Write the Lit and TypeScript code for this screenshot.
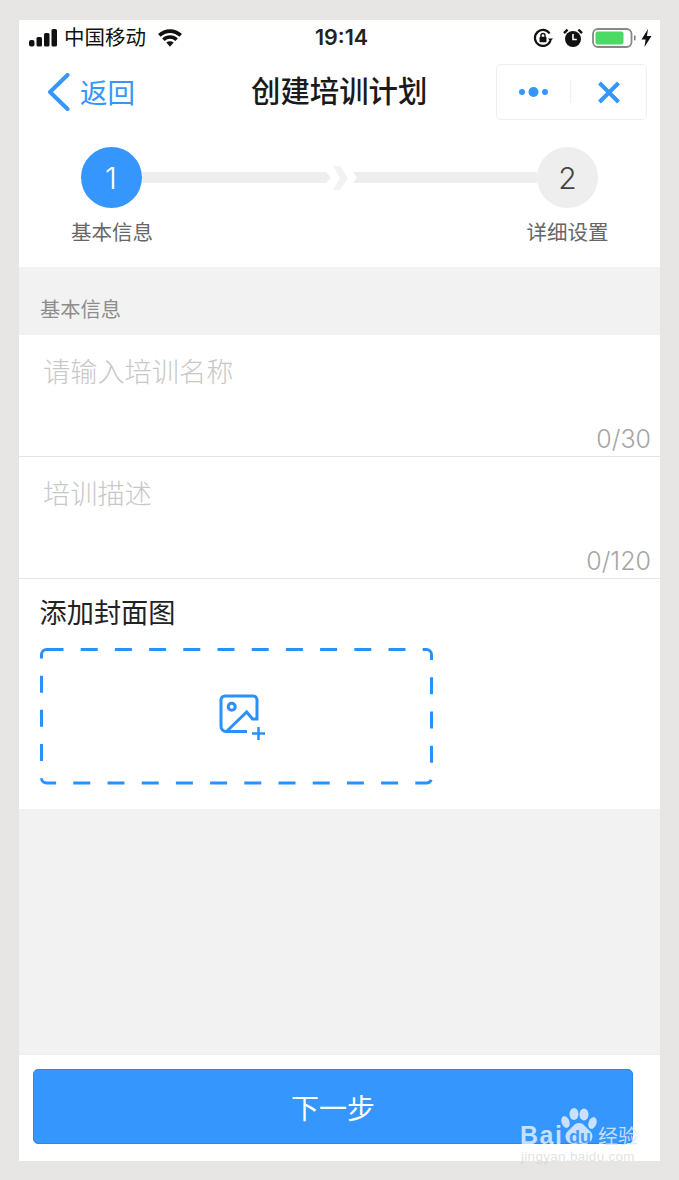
import { LitElement, html, css } from 'lit';
import { customElement } from 'lit/decorators.js';

const BLUE = '#3596fd';
const LINE_BLUE = '#2a90fb';

@customElement('app-root')
export class AppRoot extends LitElement {
  static styles = css`
    :host {
      --blue: #3596fd;
      display: block;
      min-height: 1180px;
      background: #e8e5e5;
      padding: 20px 19px 19px;
      box-sizing: border-box;
      font-family: "Liberation Sans", "Noto Sans CJK SC", sans-serif;
    }
    .frame {
      position: relative;
      width: 641px;
      height: 1141px;
      background: #f2f2f2;
      display: flex;
      flex-direction: column;
    }
    svg { display: block; flex: none; }

    .status {
      height: 35px;
      background: #fff;
      display: flex;
      align-items: center;
      padding: 0 8px 0 10px;
      color: #111;
    }
    .carrier { font-size: 20.5px; margin: 0 12px 3px 7px; }
    .time { font-family: Inter, "Liberation Sans", sans-serif; font-size: 21.5px; font-weight: 600; color: #222; margin: 0 0 1px 133px; }
    .status-right { margin-left: auto; display: flex; align-items: center; }

    .nav {
      height: 78px;
      background: #fff;
      display: flex;
      align-items: flex-start;
      padding-left: 28px;
      padding-right: 13px;
    }
    .back { display: flex; align-items: center; gap: 9px; margin-top: 18px; color: var(--blue); font-size: 27.5px; height: 38px; }
    .back span { margin-bottom: 3px; }
    .title { font-size: 29.4px; font-weight: 500; color: #1a1a1a; margin-left: 116px; margin-top: 16px; line-height: 42px; }
    .capsule {
      margin-left: auto;
      margin-top: 9px;
      width: 151px;
      height: 56px;
      box-sizing: border-box;
      border: 1px solid #eee;
      border-radius: 5px;
      display: flex;
      align-items: center;
    }

    .stepper { background: #fff; height: 134px; box-sizing: border-box; padding: 14px 62px 0 61.5px; }
    .steps { display: flex; align-items: center; }
    .circle {
      width: 61px;
      height: 61px;
      flex: none;
      border-radius: 50%;
      display: flex;
      align-items: center;
      justify-content: center;
      font-family: Inter, "Liberation Sans", sans-serif;
      font-size: 30px;
      font-weight: 300;
    }
    .circle.on { background: var(--blue); color: #fff; }
    .circle.off { background: #eee; color: #444; }
    .track {
      height: 11px;
      background: #eee;
      flex: 1;
      clip-path: polygon(0 0, 100% 0, 100% 100%, 0 100%, 4px 50%);
    }
    .track.first {
      flex: 0 0 189.5px;
      clip-path: polygon(0 0, calc(100% - 5px) 0, 100% 50%, calc(100% - 5px) 100%, 0 100%);
    }
    .labels { display: flex; justify-content: space-between; margin: 10px -10.5px 0 -9.5px; font-size: 20.5px; color: #666; line-height: 30px; }

    .section { height: 68px; display: flex; align-items: center; padding-left: 21px; padding-top: 14px; box-sizing: border-box; font-size: 20.3px; color: #8d8d8d; }

    .field {
      background: #fff;
      height: 122px;
      box-sizing: border-box;
      border-bottom: 1px solid #e5e5e5;
      padding: 17px 9px 0 24px;
      display: flex;
      flex-direction: column;
    }
    .placeholder { font-size: 27.2px; color: #c8c8c8; font-weight: 300; line-height: 42px; }
    .count {
      margin-top: auto;
      margin-bottom: 2px;
      text-align: right;
      font-family: Inter, "Liberation Sans", sans-serif;
      font-size: 25px;
      font-weight: 300;
      color: #a6a6a6;
      line-height: 30px;
    }

    .cover { background: #fff; height: 230px; box-sizing: border-box; padding: 15px 21px 0 20.5px; }
    .cover h3 { margin: 0 0 14px; font-size: 27.2px; font-weight: 400; color: #222; line-height: 40px; }

    .spacer { flex: 1; }
    .footer { background: #fff; height: 107px; box-sizing: border-box; border-top: 1px solid #eee; padding: 14px 0 0 14px; }
    .next {
      width: 600px;
      height: 75px;
      box-sizing: border-box;
      border: 1px solid #2b86e6;
      border-radius: 5px;
      background: var(--blue);
      color: #fff;
      font-family: inherit;
      font-size: 28px;
      padding: 0;
    }

    /* baidu watermark lies over the button */
    .mark { position: absolute; left: 501px; top: 1088px; width: 125px; height: 55px; color: rgba(225, 238, 255, 0.85); }
    .mark svg { position: absolute; left: 0; top: 0; }
    .mark .bai { position: absolute; left: 0; top: 15px; font-size: 25px; font-weight: 700; line-height: 24px; letter-spacing: 1.5px; }
    .mark .du { position: absolute; left: 49px; top: 19px; font-size: 18px; font-weight: 700; line-height: 20px; color: #3f9cfd; }
    .mark .jy { position: absolute; left: 78px; top: 17px; font-size: 20px; line-height: 24px; color: rgba(215, 232, 250, 0.9); }
    .mark .url { position: absolute; left: 1px; top: 43px; font-size: 13.5px; line-height: 11px; color: rgba(190, 190, 190, 0.45); white-space: nowrap; letter-spacing: 0.3px; }
  `;

  render() {
    return html`
      <div class="frame">
        <div class="status">
          <svg width="28" height="18" viewBox="0 0 28 18" fill="#111">
            <rect x="0" y="11" width="5.500" height="6.500" rx="2"/>
            <rect x="7.500" y="8" width="5.500" height="9.500" rx="1.500"/>
            <rect x="15" y="4" width="5.500" height="13.500" rx="1.500"/>
            <rect x="22.500" y="0" width="5.500" height="17.500" rx="1.500"/>
          </svg>
          <span class="carrier">中国移动</span>
          <svg width="24" height="18" viewBox="0 0 24 18" fill="none" stroke="#111" stroke-width="3.600">
            <path d="M1.300 6.400a15.500 15.500 0 0 1 21.400 0"/>
            <path d="M5.400 10.700a9.500 9.500 0 0 1 13.200 0"/>
            <path d="M8.300 13.600a5.500 5.500 0 0 1 7.400 0L12 17.800z" fill="#111" stroke="none"/>
          </svg>
          <span class="time">19:14</span>
          <div class="status-right">
            <svg width="20" height="20" viewBox="0 0 20 20" fill="none" stroke="#111" stroke-width="2.200">
              <path d="M17.500 12.500A8 8 0 1 1 16.600 5.500"/>
              <path d="M15 10.500h5l-2.500 3z" fill="#111" stroke="none"/>
              <rect x="6.500" y="8.800" width="7" height="5.400" rx="1" fill="#111" stroke="none"/>
              <path d="M8 9V7.500a2 2 0 0 1 4 0V9" stroke-width="1.400"/>
            </svg>
            <svg style="margin-left:10px" width="20" height="20" viewBox="0 0 20 20">
              <circle cx="10" cy="11" r="8" fill="#111"/>
              <path d="M10 6v5.500h3.800" fill="none" stroke="#fff" stroke-width="1.600"/>
              <path d="M1 5.200 4.600 1.600M19 5.200 15.400 1.600" stroke="#111" stroke-width="2.400"/>
            </svg>
            <svg style="margin-left:9px" width="46" height="20" viewBox="0 0 46 20">
              <rect x="1" y="1" width="38.500" height="18" rx="5" fill="#fff" stroke="#888" stroke-width="1.800"/>
              <rect x="3.500" y="3.500" width="28" height="13" rx="2" fill="#4cd964"/>
              <rect x="42" y="7.500" width="1.500" height="5" rx="0.700" fill="#777"/>
            </svg>
            <svg style="margin-left:3px" width="11" height="20" viewBox="0 0 11 20">
              <path d="M7 1 0.500 11.500H4.600L3.500 19 10.500 8H6z" fill="#111"/>
            </svg>
          </div>
        </div>

        <div class="nav">
          <div class="back">
            <svg width="24" height="38" viewBox="0 0 24 38" fill="none" stroke=${BLUE} stroke-width="4" stroke-linecap="round" stroke-linejoin="round">
              <path d="M20.500 2 3 19l17.500 17"/>
            </svg>
            <span>返回</span>
          </div>
          <div class="title">创建培训计划</div>
          <div class="capsule">
            <svg width="149" height="54" viewBox="0 0 149 54">
              <g fill=${BLUE}>
                <circle cx="25" cy="27" r="3"/>
                <circle cx="36.500" cy="27" r="5"/>
                <circle cx="48" cy="27" r="3"/>
              </g>
              <path d="M73.500 15v23" stroke="#f0f0f0" stroke-width="1.500"/>
              <path d="M102.500 18l19 19M121.500 18l-19 19" stroke=${BLUE} stroke-width="4"/>
            </svg>
          </div>
        </div>

        <div class="stepper">
          <div class="steps">
            <div class="circle on">1</div>
            <div class="track first"></div>
            <svg width="22" height="24" viewBox="0 0 22 24">
              <path d="M2 0h7l8 12-8 12H2l7-12z" fill="#f2f2f2"/>
            </svg>
            <div class="track"></div>
            <div class="circle off">2</div>
          </div>
          <div class="labels"><span>基本信息</span><span>详细设置</span></div>
        </div>

        <div class="section">基本信息</div>

        <div class="field">
          <div class="placeholder">请输入培训名称</div>
          <div class="count">0/30</div>
        </div>
        <div class="field">
          <div class="placeholder">培训描述</div>
          <div class="count">0/120</div>
        </div>

        <div class="cover">
          <h3>添加封面图</h3>
          <svg width="394" height="138" viewBox="0 0 394 138" fill="none">
            <rect x="1.500" y="1.500" width="390" height="133.500" rx="5" stroke=${LINE_BLUE} stroke-width="3" stroke-dasharray="17 17.200"/>
            <g stroke=${LINE_BLUE} stroke-width="3">
              <path d="M207 83.500H186a5 5 0 0 1-5-5V52a4 4 0 0 1 4-4h28a4 4 0 0 1 4 4v19h-4.500L206.700 64 186.500 83.500"/>
              <circle cx="191.700" cy="58.700" r="3.500"/>
              <path d="M212 85.500h13M218.500 79v13" stroke-width="2.500"/>
            </g>
          </svg>
        </div>

        <div class="spacer"></div>

        <div class="footer">
          <button class="next">下一步</button>
        </div>

        <div class="mark">
          <svg width="125" height="40" viewBox="0 0 125 40" fill="rgba(225,238,255,0.85)">
            <ellipse cx="54" cy="6" rx="4.500" ry="6"/>
            <ellipse cx="64" cy="6.500" rx="4.500" ry="6"/>
            <ellipse cx="45.500" cy="14" rx="4" ry="6" transform="rotate(-20 45.500 14)"/>
            <ellipse cx="72.500" cy="15" rx="4" ry="6" transform="rotate(20 72.500 15)"/>
            <path d="M59 15c5 0 7 5 11 8 5 4 2 13-5 13-2.500 0-4-.8-6-.8s-3.500.8-6 .8c-7 0-10-9-5-13 4-3 6-8 11-8z"/>
          </svg>
          <span class="bai">Bai</span>
          <span class="du">du</span>
          <span class="jy">经验</span>
          <span class="url">jingyan.baidu.com</span>
        </div>
      </div>
    `;
  }
}
